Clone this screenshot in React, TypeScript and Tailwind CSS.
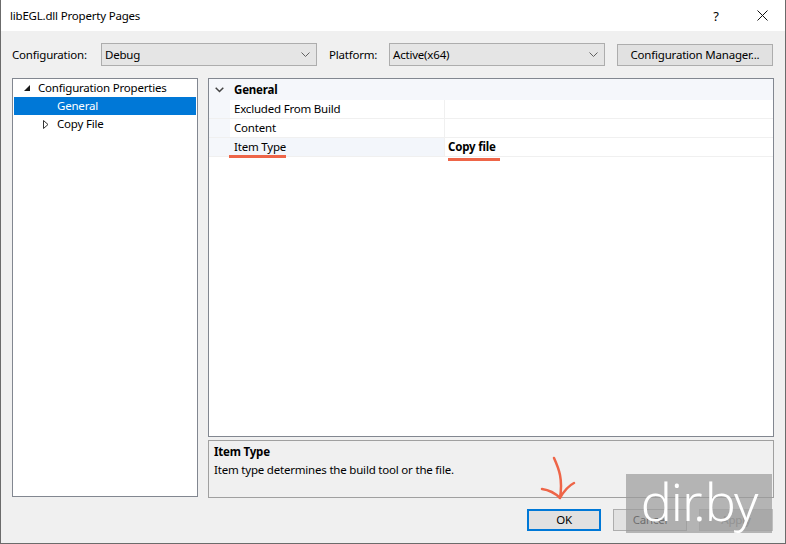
import React from "react";

const Chevron = ({ className = "" }: { className?: string }) => (
  <svg width="9" height="5" viewBox="0 0 9 5" className={className}>
    <path d="M0.5 0.5 L4.5 4.5 L8.5 0.5" fill="none" stroke="#606060" strokeWidth="1" />
  </svg>
);

function Combo({ value, width }: { value: string; width: string }) {
  return (
    <div className={`${width} h-[23px] flex items-center justify-between border border-[#adadad] bg-[#e5e5e5] pl-[3px] pr-[6px]`}>
      <span>{value}</span>
      <Chevron />
    </div>
  );
}

function PropRow({ name, value, selected }: { name: string; value?: string; selected?: boolean }) {
  return (
    <div className="flex h-[19px] border-b border-[#f0f0f0]">
      <div className="w-[21px] bg-[#f5f7fb]" />
      <div className={`w-[214px] pl-[4px] flex items-center ${selected ? "bg-[#f3f6fb]" : ""}`}>{name}</div>
      <div className="flex-1 border-l border-[#f0f0f0] pl-[3px] flex items-center font-bold">{value}</div>
    </div>
  );
}

function Btn({ label, primary, disabled }: { label: string; primary?: boolean; disabled?: boolean }) {
  return (
    <div
      className={`w-[74px] h-[22px] flex items-center justify-center ${
        primary
          ? "border-2 border-[#0078d7] bg-[#e1e1e1]"
          : disabled
          ? "border border-[#bfbfbf] bg-[#cccccc] text-[#838383]"
          : "border border-[#adadad] bg-[#e1e1e1]"
      }`}
    >
      {label}
    </div>
  );
}

export default function App() {
  return (
    <div className="relative w-[786px] h-[544px] flex flex-col overflow-hidden border-x border-b border-[#6b6b6b] bg-[#f0f0f0] text-[11.5px] tracking-[-0.2px] leading-[16px] text-black font-['Segoe_UI','Noto_Sans',sans-serif]">
      {/* title bar */}
      <div className="h-[31px] shrink-0 bg-white flex items-center pl-[9px]">
        <span className="flex-1">libEGL.dll Property Pages</span>
        <span className="w-[46px] text-center text-[13px]">?</span>
        <div className="w-[46px] flex justify-center">
          <svg width="11" height="11" viewBox="0 0 11 11">
            <path d="M0.5 0.5 L10.5 10.5 M10.5 0.5 L0.5 10.5" stroke="#111" strokeWidth="1" />
          </svg>
        </div>
      </div>

      <div className="flex-1 flex flex-col px-[11px]">
        {/* configuration row */}
        <div className="mt-[12px] h-[23px] flex items-center">
          <span className="w-[89px]">Configuration:</span>
          <Combo value="Debug" width="w-[216px]" />
          <span className="ml-[12px] w-[60px]">Platform:</span>
          <Combo value="Active(x64)" width="w-[216px]" />
          <div className="ml-[12px] w-[156px] h-[22px] border border-[#adadad] bg-[#e1e1e1] flex items-center justify-center">
            Configuration Manager...
          </div>
        </div>

        {/* main area */}
        <div className="mt-[12px] flex gap-[10px] h-[420px]">
          <div className="w-[186px] h-[419px] border border-[#828790] bg-white">
            <div className="h-[18px] flex items-center">
              <svg width="8" height="8" viewBox="0 0 8 8" className="ml-[10px] mr-[7px]">
                <path d="M7 1 L7 7 L1 7 Z" fill="#1a1a1a" />
              </svg>
              <span>Configuration Properties</span>
            </div>
            <div className="h-[18px] flex items-center mx-[1px] bg-[#0078d7] text-white pl-[43px]">General</div>
            <div className="h-[18px] flex items-center">
              <svg width="6" height="9" viewBox="0 0 6 9" className="ml-[30px] mr-[8px]">
                <path d="M0.5 0.5 L5 4.5 L0.5 8.5 Z" fill="none" stroke="#333" strokeWidth="1" />
              </svg>
              <span>Copy File</span>
            </div>
          </div>

          <div className="flex-1 flex flex-col gap-[3px]">
            <div className="h-[359px] border border-[#828790] bg-white">
              <div className="h-[21px] bg-[#f5f7fb] flex items-center font-bold">
                <svg width="9" height="6" viewBox="0 0 9 6" className="ml-[6px] mr-[10px]">
                  <path d="M0.7 0.7 L4.5 4.5 L8.3 0.7" fill="none" stroke="#444" strokeWidth="1.5" />
                </svg>
                <span>General</span>
              </div>
              <PropRow name="Excluded From Build" />
              <PropRow name="Content" />
              <PropRow name="Item Type" value="Copy file" selected />
            </div>
            <div className="flex-1 border border-[#a0a0a0] pl-[5px] pt-[3px]">
              <div className="font-bold">Item Type</div>
              <div className="mt-[2px]">Item type determines the build tool or the file.</div>
            </div>
          </div>
        </div>

        {/* buttons */}
        <div className="mt-[11px] flex justify-end gap-[12px] pr-[1px]">
          <Btn label="OK" primary />
          <Btn label="Cancel" />
          <Btn label="Apply" disabled />
        </div>
      </div>

      {/* annotations */}
      <div className="absolute left-[228px] top-[155px] w-[57px] h-[3px] bg-[#ee6548]" />
      <div className="absolute left-[447px] top-[158px] w-[52px] h-[3px] bg-[#ee6548]" />
      <svg className="absolute left-[536px] top-[455px]" width="44" height="50" viewBox="0 0 44 50">
        <path
          d="M17 3 C22 14 26 24 23 43 M5 34 C12 35 18 38 23 43 C27 36 31 31 37 28"
          fill="none"
          stroke="#ee6548"
          strokeWidth="2.5"
          strokeLinecap="round"
          strokeLinejoin="round"
        />
      </svg>

      {/* watermark */}
      <div className="absolute left-[625px] top-[474px] w-[146px] h-[59px] bg-[#9a9a9a]/70 flex items-center justify-center overflow-hidden">
        <span className="text-white text-[52px] leading-none font-light tracking-[-1px] -mt-[6px]">dir.by</span>
      </div>
    </div>
  );
}
